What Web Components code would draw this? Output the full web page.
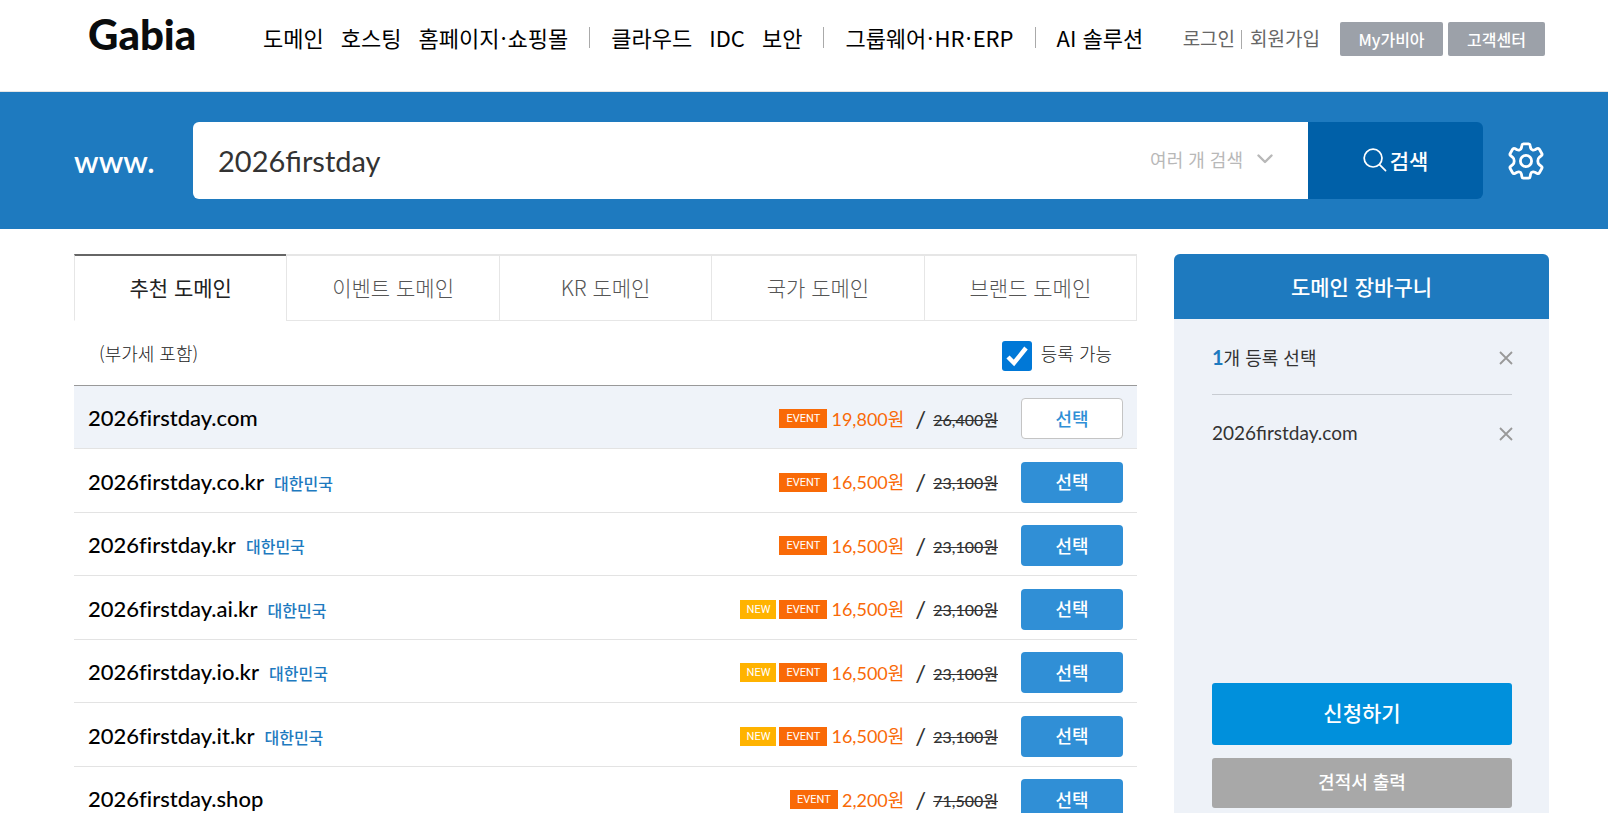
<!DOCTYPE html>
<html lang="ko">
<head>
<meta charset="utf-8">
<meta name="viewport" content="width=device-width, initial-scale=1">
<title>Gabia 도메인 검색</title>
<style>
  body {
    margin: 0;
    background: #fff;
    color: #333;
    font-family: Lato, "Noto Sans CJK KR", sans-serif;
    font-size: 20px;
  }
</style>
</head>
<body>
<domain-page></domain-page>

<script>
const define = (name, html, setup) => {
  const template = document.createElement("template");
  template.innerHTML = `<style>*{box-sizing:border-box}a{color:inherit;text-decoration:none}button{font:inherit;cursor:pointer;border:0;padding:0}</style>` + html;
  customElements.define(name, class extends HTMLElement {
    constructor() {
      super();
      this.attachShadow({ mode: "open" }).append(template.content.cloneNode(true));
      if (setup) setup(this, this.shadowRoot);
    }
  });
};

define("site-header", `
<style>
  :host { display: block; border-bottom: 1px solid #e5e5e5; font-family: "Noto Sans CJK KR", sans-serif; }
  header { display: flex; align-items: flex-start; height: 91px; padding: 0 63px 0 88px; white-space: nowrap; }
  .logo { font: 900 42px/48px Lato, sans-serif; color: #0a0c0d; margin-top: 10px; width: 175px; }
  nav { display: flex; align-items: center; margin-top: 20px; font-size: 22px; line-height: 34px; color: #000; font-weight: 400; }
  nav a { margin-right: 17px; }
  nav span { padding: 0 1px; }
  i { width: 1px; height: 21px; background: #aaa; }
  nav i { margin: 0 21px 0 4px; }
  .user { display: flex; align-items: center; margin: 21px 0 0 auto; font-size: 19px; line-height: 34px; color: #666; }
  .user i { margin: 0 8px 0 6px; height: 19px; }
  .user > a:not(.box) { padding-bottom: 2px; }
  .user .box { background: #9ca1a9; color: #fff; font-size: 16px; font-weight: 500; border-radius: 2px; margin-left: 5px; width: 97px; text-align: center; }
  .user .my { width: 103px; margin-left: 20px; }
</style>
<header>
  <a class="logo" href="#">Gabia</a>
  <nav>
    <a href="#">도메인</a><a href="#">호스팅</a><a href="#">홈페이지<span>·</span>쇼핑몰</a><i></i>
    <a href="#">클라우드</a><a href="#">IDC</a><a href="#">보안</a><i></i>
    <a href="#">그룹웨어<span>·</span>HR<span>·</span>ERP</a><i></i><a href="#">AI 솔루션</a>
  </nav>
  <div class="user">
    <a href="#">로그인</a><i></i><a href="#">회원가입</a>
    <a class="box my" href="#">My가비아</a><a class="box" href="#">고객센터</a>
  </div>
</header>`);

define("domain-search", `
<style>
  :host { display: block; background: #1e7abf; }
  form { display: flex; align-items: center; height: 137px; padding: 0 64px 0 74px; }
  .www { width: 119px; flex: none; color: #fff; font-size: 31px; line-height: 40px; font-weight: 600; }
  .field { flex: 1; display: flex; align-items: center; height: 77px; background: #fff; border-radius: 6px 0 0 6px; padding: 0 35px 0 25px; }
  input { flex: 1; min-width: 0; border: 0; outline: 0; background: none; padding: 0; font: 29px/40px Lato, sans-serif; color: #333; }
  .multi { display: flex; align-items: center; gap: 14px; padding-bottom: 3px; background: none; color: #b8b8b8; font: 18px/30px "Noto Sans CJK KR", sans-serif; }
  .go { display: flex; align-items: center; justify-content: center; gap: 3px; width: 175px; height: 77px; padding-bottom: 2px; background: #0060a8; color: #fff; border-radius: 0 6px 6px 0; font: 500 21px/32px "Noto Sans CJK KR", sans-serif; }
  .set { width: 36px; height: 38px; margin-left: 25px; background: none; }
  svg { display: block; fill: none; stroke: currentColor; stroke-linecap: round; stroke-linejoin: round; }
  .set { color: #fff; }
</style>
<form onsubmit="return false">
  <label class="www" for="q">www.</label>
  <div class="field">
    <input id="q" type="text" value="2026firstday" spellcheck="false">
    <button class="multi" type="button">여러 개 검색
      <svg width="16" height="10" viewBox="0 0 16 10" stroke-width="2.400"><path d="M1.500 1.500l6.500 6.500 6.500-6.500"/></svg>
    </button>
  </div>
  <button class="go" type="submit">
    <svg width="24" height="24" viewBox="0 0 25 25" stroke-width="1.800"><circle cx="10.500" cy="10.500" r="9.300"/><path d="M17.500 17.500l6 6"/></svg>검색
  </button>
  <button class="set" type="button" aria-label="설정">
    <svg width="36" height="38" viewBox="0 0 36 38" stroke-width="2.800"><circle cx="18" cy="19" r="5.600"/><path d="M15.400 1.800h5.200q1.300 0 1.500 1.400l.5 2.700q.4 1.900 2.200 2.200 1 .2 2.100-.3l2.300-1.200q1.400-.7 2.200.7l2.400 4.200q.7 1.200-.4 2.100l-2.100 1.700q-1.500 1.300-1.500 3.700t1.500 3.700l2.100 1.700q1.100.9.400 2.100l-2.400 4.200q-.8 1.400-2.200.7l-2.300-1.200q-1.100-.5-2.100-.3-1.800.3-2.200 2.200l-.5 2.700q-.2 1.400-1.500 1.400h-5.200q-1.300 0-1.500-1.400l-.5-2.700q-.4-1.900-2.200-2.200-1-.2-2.100.3l-2.300 1.200q-1.400.7-2.200-.7l-2.400-4.200q-.7-1.200.4-2.100l2.100-1.700q1.500-1.300 1.500-3.700t-1.500-3.700l-2.100-1.700q-1.100-.9-.4-2.100l2.400-4.200q.8-1.400 2.200-.7l2.300 1.200q1.100.5 2.100.3 1.800-.3 2.200-2.200l.5-2.700q.2-1.400 1.500-1.400z"/></svg>
  </button>
</form>`);

define("domain-tabs", `
<style>
  :host { display: block; font-family: "Noto Sans CJK KR", sans-serif; }
  div { display: flex; border-right: 1px solid #e6e6e6; }
  button { flex: 1; height: 67px; padding-bottom: 2px; background: #fff; border: solid #e6e6e6; border-width: 2px 0 1px 1px; font-size: 21px; line-height: 30px; font-weight: 300; color: #555; }
  button[aria-selected=true] { border-top-color: #666; border-bottom-color: #fff; color: #222; font-weight: 400; }
</style>
<div role="tablist">
  <button role="tab" aria-selected="true">추천 도메인</button>
  <button role="tab" aria-selected="false">이벤트 도메인</button>
  <button role="tab" aria-selected="false">KR 도메인</button>
  <button role="tab" aria-selected="false">국가 도메인</button>
  <button role="tab" aria-selected="false">브랜드 도메인</button>
</div>`);

define("result-filter", `
<style>
  :host { display: flex; justify-content: space-between; align-items: center; height: 64px; padding: 0 25px; font: 300 18px/28px "Noto Sans CJK KR", sans-serif; color: #222; }
  span { padding-bottom: 1px; }
  label { display: flex; align-items: center; gap: 9px; }
  input { appearance: none; flex: none; width: 30px; height: 30px; margin: 5px 0 0; border: 1px solid #767676; border-radius: 3px; background: #fff; }
  input:checked { border: 0; background: #0078d7 url("data:image/svg+xml,%3Csvg xmlns='http://www.w3.org/2000/svg' viewBox='0 0 30 30'%3E%3Cpath d='M6 16l6 6L24 7' fill='none' stroke='white' stroke-width='4.5'/%3E%3C/svg%3E"); }
</style>
<span>(부가세 포함)</span>
<label><input type="checkbox" checked><span>등록 가능</span></label>`);

define("promo-badge", `
<style>
  :host { display: block; width: 48px; height: 19px; text-align: center; background: #f96a07; color: #fff; font: 400 11px/19px Roboto, sans-serif; }
  :host([kind=new]) { width: 36px; background: #ffb300; }
</style><slot></slot>`);

define("select-button", `
<style>
  :host { display: block; }
  button { display: block; width: 102px; height: 41px; padding-bottom: 2px; border-radius: 4px; background: #308fd6; color: #fff; font: 500 18px/28px "Noto Sans CJK KR", sans-serif; }
  :host([chosen]) button { background: #fff; color: #308fd6; border: 1px solid #c4c4c4; }
</style><button type="button"><slot></slot></button>`);

const results = [
  ["2026firstday.com", "", ["EVENT"], "19,800원", "26,400원"],
  ["2026firstday.co.kr", "대한민국", ["EVENT"], "16,500원", "23,100원"],
  ["2026firstday.kr", "대한민국", ["EVENT"], "16,500원", "23,100원"],
  ["2026firstday.ai.kr", "대한민국", ["NEW", "EVENT"], "16,500원", "23,100원"],
  ["2026firstday.io.kr", "대한민국", ["NEW", "EVENT"], "16,500원", "23,100원"],
  ["2026firstday.it.kr", "대한민국", ["NEW", "EVENT"], "16,500원", "23,100원"],
  ["2026firstday.shop", "", ["EVENT"], "2,200원", "71,500원"]
];

define("domain-results", `
<style>
  :host { display: block; border-top: 1px solid #999; }
  table { width: 100%; border-collapse: separate; border-spacing: 0; }
  tr { height: 63px; }
  tr:nth-child(even) { height: 64px; }
  td { padding: 0; border-bottom: 1px solid #e3e3e3; }
  .chosen { background: #eff3f9; }
  .name { padding: 2px 0 0 14px; font-size: 22px; line-height: 30px; font-weight: 500; color: #000; font-variant-ligatures: none; }
  .name span { margin-left: 10px; font: 500 16px/24px "Noto Sans CJK KR", sans-serif; color: #1e7abf; }
  .offer { display: flex; align-items: center; justify-content: flex-end; line-height: 30px; padding: 3px 0 0; }
  promo-badge { margin-right: 4px; }
  promo-badge[kind=new] { margin-right: 3px; }
  strong { font-weight: 400; font-size: 18px; color: #f96a07; }
  .slash { margin: 0 7px 0 11px; font-size: 24px; }
  del { font-size: 16px; font-weight: 500; padding-top: 2px; }
  .act { width: 139px; padding: 3px 14px 0 23px; }
</style>
<table><tbody></tbody></table>`, (host, root) => {
  root.querySelector("tbody").innerHTML = results.map(([name, land, tags, price, old], i) => `
    <tr${i ? "" : ' class="chosen"'}>
      <td class="name">${name}${land ? `<span>${land}</span>` : ""}</td>
      <td><div class="offer">${tags.map(t => `<promo-badge kind="${t.toLowerCase()}">${t}</promo-badge>`).join("")}<strong>${price}</strong><span class="slash">/</span><del>${old}</del></div></td>
      <td class="act"><select-button${i ? "" : " chosen"}>선택</select-button></td>
    </tr>`).join("");
});

define("cart-line", `
<style>
  :host { display: flex; align-items: center; justify-content: space-between; height: 76px; }
  button { width: 14px; height: 14px; background: none; color: #999; margin: 2px -1px 0 0; }
  svg { display: block; }
</style>
<slot></slot>
<button type="button" aria-label="삭제"><svg width="14" height="14" viewBox="0 0 14 14" stroke="currentColor" stroke-width="1.800"><path d="M1 1l12 12M13 1L1 13"/></svg></button>`);

define("domain-cart", `
<style>
  :host { display: block; background: #eef2f8; border-radius: 6px; overflow: hidden; }
  h2 { margin: 0; background: #1e7abf; color: #fff; text-align: center; height: 65px; padding-top: 17px; font: 500 21px/30px "Noto Sans CJK KR", sans-serif; }
  .list { height: 364px; padding: 0 37px 0 38px; }
  cart-line:first-child { border-bottom: 1px solid #c8ccd2; }
  b { color: #1e7abf; font-family: Lato, sans-serif; font-size: 20px; }
  .sum { font: 18px/28px "Noto Sans CJK KR", sans-serif; }
  .item { font-size: 19px; line-height: 28px; }
  .actions { display: grid; gap: 13px; padding: 0 37px 38px 38px; }
  .actions button { border-radius: 3px; color: #fff; height: 62px; padding-bottom: 4px; background: #0090dc; font: 500 21px/30px "Noto Sans CJK KR", sans-serif; }
  .actions .quote { height: 50px; background: #a8a8a8; font-size: 18px; }
</style>
<h2>도메인 장바구니</h2>
<div class="list">
  <cart-line><span class="sum"><b>1</b>개 등록 선택</span></cart-line>
  <cart-line><span class="item">2026firstday.com</span></cart-line>
</div>
<div class="actions"><button type="button">신청하기</button><button class="quote" type="button">견적서 출력</button></div>`);

define("domain-page", `
<style>
  :host { display: block; }
  main { display: grid; grid-template-columns: minmax(0, 1fr) 375px; gap: 37px; align-items: start; padding: 25px 59px 0 74px; }
</style>
<site-header></site-header>
<domain-search></domain-search>
<main>
  <section>
    <domain-tabs></domain-tabs>
    <result-filter></result-filter>
    <domain-results></domain-results>
  </section>
  <domain-cart></domain-cart>
</main>`);
</script>
</body>
</html>
